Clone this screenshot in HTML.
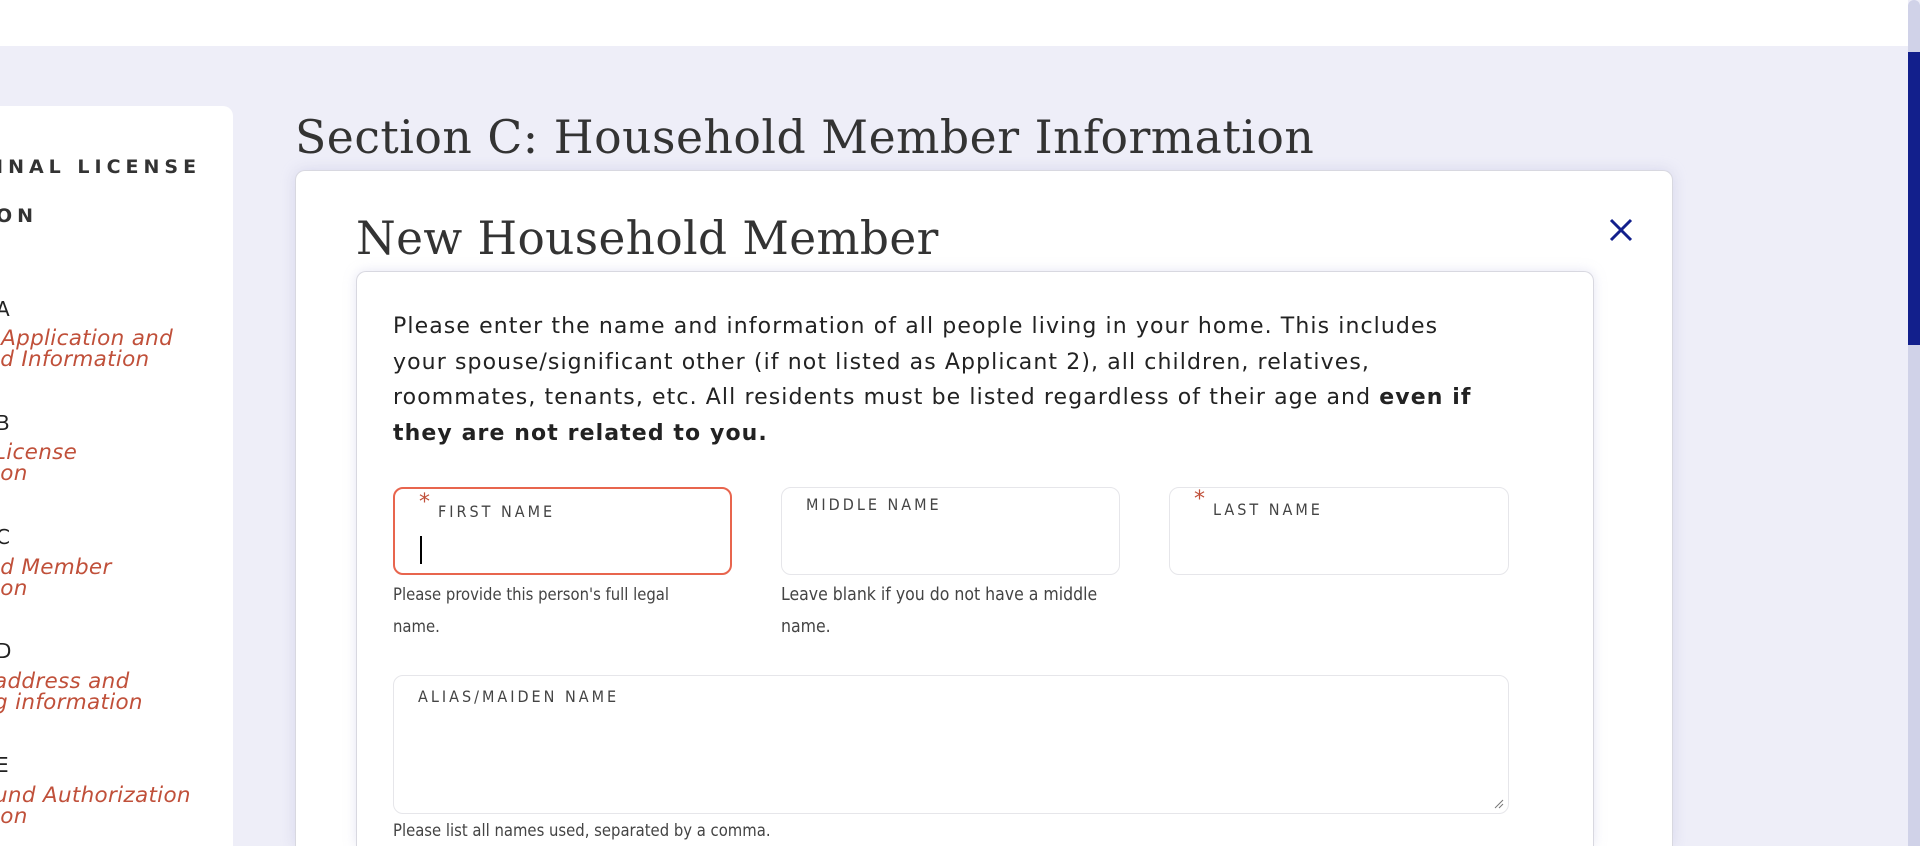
<!DOCTYPE html>
<html><head><meta charset="utf-8"><style>
*{margin:0;padding:0;box-sizing:border-box}
html,body{width:1920px;height:846px;overflow:hidden;background:#eeeef8;font-family:"DejaVu Sans","Liberation Sans",sans-serif;position:relative}
.top{position:absolute;left:0;top:0;width:1908px;height:46px;background:#fff}
.sb{position:absolute;left:1908px;top:0;width:12px;height:846px;background:#d0d2e8;border-radius:6px 6px 0 0}
.sb i{position:absolute;left:0;top:52px;width:12px;height:293px;background:#121f8c}
.side{position:absolute;left:-20px;top:106px;width:253px;height:740px;background:#fff;border-radius:10px 10px 0 0}
.s{position:absolute;white-space:nowrap}
.cap{font-family:"DejaVu Sans",sans-serif;font-weight:bold;font-size:19px;letter-spacing:5px;color:#333}
.let{font-size:20px;color:#222;font-family:"DejaVu Sans",sans-serif}
.it{font-style:italic;color:#c0503a;font-size:21.5px;line-height:21px;font-family:"DejaVu Sans",sans-serif;letter-spacing:0.3px}
h1{position:absolute;left:295px;top:111px;font-family:"DejaVu Serif",serif;font-weight:normal;font-size:45.7px;color:#333;white-space:nowrap;letter-spacing:0.5px}
.modal{position:absolute;left:295px;top:170px;width:1378px;height:676px;background:#fff;border-radius:10px 10px 0 0;border:1px solid #d8d8e0;border-bottom:none;box-shadow:0 0 14px rgba(180,180,220,.4)}
h2{position:absolute;left:356px;top:212px;font-family:"DejaVu Serif",serif;font-weight:normal;font-size:45.4px;color:#333;white-space:nowrap;letter-spacing:0.4px}
.x{position:absolute;left:1609px;top:218px}
.inner{position:absolute;left:356px;top:271px;width:1238px;height:575px;background:#fff;border-radius:10px 10px 0 0;border:1px solid #d8d8e0;border-bottom:none;box-shadow:0 0 12px rgba(180,180,220,.35)}
.p{position:absolute;left:393px;top:309px;width:1090px;font-size:22px;line-height:35.5px;color:#222;letter-spacing:1.1px}
.f{position:absolute;height:88px;border:1px solid #e6e6ea;border-radius:10px;background:#fff}
.f.a{border:2.5px solid #e8654e}
.lab{position:absolute;font-family:"DejaVu Sans Condensed","DejaVu Sans",sans-serif;font-size:16px;letter-spacing:3px;color:#444}
.st{position:absolute;color:#c0503a;font-size:22px}
.h{position:absolute;font-family:"DejaVu Sans Condensed","DejaVu Sans",sans-serif;font-size:16.5px;color:#444;line-height:32px}
</style></head><body>
<div class="top"></div>
<div class="sb"><i></i></div>
<div class="side"></div>
<div class="s cap" style="left:-4px;top:156px">INAL LICENSE</div>
<div class="s cap" style="left:-4px;top:205px">ON</div>
<div class="s let" style="left:-4px;top:297px">A</div>
<div class="s it" style="left:-6px;top:328px">.Application and<br>ld Information</div>
<div class="s let" style="left:-4px;top:411px">B</div>
<div class="s it" style="left:-6px;top:442px"> License<br>ion</div>
<div class="s let" style="left:-4px;top:525px">C</div>
<div class="s it" style="left:-6px;top:557px">ld Member<br>ion</div>
<div class="s let" style="left:-4px;top:639px">D</div>
<div class="s it" style="left:-6px;top:671px"> address and<br>g information</div>
<div class="s let" style="left:-4px;top:753px">E</div>
<div class="s it" style="left:-6px;top:785px">und Authorization<br>ion</div>

<h1>Section C: Household Member Information</h1>
<div class="modal"></div>
<h2>New Household Member</h2>
<svg class="x" width="24" height="24" viewBox="0 0 24 24"><path d="M2 2L22 22M22 2L2 22" stroke="#121f8c" stroke-width="3"/></svg>
<div class="inner"></div>
<div class="p">Please enter the name and information of all people living in your home. This includes your spouse/significant other (if not listed as Applicant 2), all children, relatives, roommates, tenants, etc. All residents must be listed regardless of their age and <b>even if they are not related to you.</b></div>

<div class="f a" style="left:393px;top:487px;width:339px"></div>
<div class="st" style="left:419px;top:490px">*</div>
<div class="lab" style="left:438px;top:502px">FIRST NAME</div>
<div style="position:absolute;left:420px;top:536px;width:2px;height:28px;background:#000"></div>
<div class="h" style="left:393px;top:579px;width:320px">Please provide this person's full legal name.</div>

<div class="f" style="left:781px;top:487px;width:339px"></div>
<div class="lab" style="left:806px;top:495px">MIDDLE NAME</div>
<div class="h" style="left:781px;top:579px;width:345px;font-size:17.5px">Leave blank if you do not have a middle name.</div>

<div class="f" style="left:1169px;top:487px;width:340px"></div>
<div class="st" style="left:1194px;top:487px">*</div>
<div class="lab" style="left:1213px;top:500px">LAST NAME</div>

<div class="f" style="left:393px;top:675px;width:1116px;height:139px"></div>
<div class="lab" style="left:418px;top:687px">ALIAS/MAIDEN NAME</div>
<svg style="position:absolute;left:1494px;top:799px" width="10" height="10"><path d="M1 9L9 1M5 9L9 5" stroke="#777" stroke-width="1"/></svg>
<div class="h" style="left:393px;top:815px">Please list all names used, separated by a comma.</div>
</body></html>
